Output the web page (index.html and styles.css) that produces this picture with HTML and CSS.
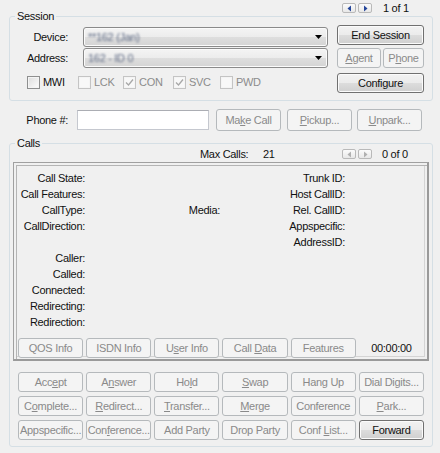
FILE: index.html
```html
<!DOCTYPE html>
<html>
<head>
<meta charset="utf-8">
<title>Session</title>
<link rel="stylesheet" href="styles.css">
</head>
<body>
<div class="app">
  <div class="topbar">
    <div class="nav">
      <span class="navbtn"><svg width="5" height="7" viewBox="0 0 5 7"><path d="M4 0.5 L0.5 3.5 L4 6.5Z" class="tri on"/></svg></span>
      <span class="navbtn"><svg width="5" height="7" viewBox="0 0 5 7"><path d="M1 0.5 L4.5 3.5 L1 6.5Z" class="tri on"/></svg></span>
    </div>
    <span class="count">1 of 1</span>
  </div>

  <section class="group session">
    <span class="group-title">Session</span>
    <div class="session-body">
      <div class="session-left">
        <div class="field-row first">
          <span class="lbl">Device:</span>
          <div class="combo"><span class="blur">**162 (Jan)</span><svg class="arrow" width="7" height="4" viewBox="0 0 7 4"><path d="M0 0 L7 0 L3.5 4Z" fill="#000"/></svg></div>
        </div>
        <div class="field-row second">
          <span class="lbl">Address:</span>
          <div class="combo"><span class="blur">162 - ID 0</span><svg class="arrow" width="7" height="4" viewBox="0 0 7 4"><path d="M0 0 L7 0 L3.5 4Z" fill="#000"/></svg></div>
        </div>
        <div class="checks">
          <span class="chk"><span class="cb"></span>MWI</span>
          <span class="chk off"><span class="cb"></span>LCK</span>
          <span class="chk off"><span class="cb"><svg width="11" height="11" viewBox="0 0 11 11"><path d="M2 5.5 L4.5 8 L9 2.5" fill="none" stroke="#a8a8a8" stroke-width="1.3"/></svg></span>CON</span>
          <span class="chk off"><span class="cb"><svg width="11" height="11" viewBox="0 0 11 11"><path d="M2 5.5 L4.5 8 L9 2.5" fill="none" stroke="#a8a8a8" stroke-width="1.3"/></svg></span>SVC</span>
          <span class="chk off"><span class="cb"></span>PWD</span>
        </div>
      </div>
      <div class="session-right">
        <button class="btn on end">End Session</button>
        <div class="pair">
          <button class="btn agent"><u>A</u>gent</button>
          <button class="btn phone">P<u>h</u>one</button>
        </div>
        <button class="btn on configure">Configure</button>
      </div>
    </div>
  </section>

  <div class="phone-row">
    <span class="lbl phone-lbl">Phone #:</span>
    <span class="edit"></span>
    <button class="btn tall make">Ma<u>k</u>e Call</button>
    <button class="btn tall pickup"><u>P</u>ickup...</button>
    <button class="btn tall unpark"><u>U</u>npark...</button>
  </div>

  <section class="group calls">
    <span class="group-title">Calls</span>
    <div class="calls-top">
      <span class="maxlbl">Max Calls:</span>
      <span>21</span>
      <div class="nav calls-nav">
        <span class="navbtn"><svg width="5" height="7" viewBox="0 0 5 7"><path d="M4 0.5 L0.5 3.5 L4 6.5Z" class="tri"/></svg></span>
        <span class="navbtn"><svg width="5" height="7" viewBox="0 0 5 7"><path d="M1 0.5 L4.5 3.5 L1 6.5Z" class="tri"/></svg></span>
      </div>
      <span class="count calls-count">0 of 0</span>
    </div>

    <div class="panel">
      <div class="info">
        <div class="col col1">
          <div>Call State:</div>
          <div>Call Features:</div>
          <div>CallType:</div>
          <div>CallDirection:</div>
          <div></div>
          <div>Caller:</div>
          <div>Called:</div>
          <div>Connected:</div>
          <div>Redirecting:</div>
          <div>Redirection:</div>
        </div>
        <div class="col col2">
          <div>Media:</div>
        </div>
        <div class="col col3">
          <div>Trunk ID:</div>
          <div>Host CallID:</div>
          <div>Rel. CallID:</div>
          <div>Appspecific:</div>
          <div>AddressID:</div>
        </div>
      </div>
      <div class="grid6 panel-btns">
        <button class="btn">QOS Info</button>
        <button class="btn">ISDN Info</button>
        <button class="btn">U<u>s</u>er Info</button>
        <button class="btn">Call <u>D</u>ata</button>
        <button class="btn">Features</button>
        <span class="time">00:00:00</span>
      </div>
    </div>

    <div class="grid6 actions">
      <button class="btn">Acc<u>e</u>pt</button>
      <button class="btn">A<u>n</u>swer</button>
      <button class="btn">Ho<u>l</u>d</button>
      <button class="btn"><u>S</u>wap</button>
      <button class="btn">Hang Up</button>
      <button class="btn">Dial Di<u>g</u>its...</button>
      <button class="btn">C<u>o</u>mplete...</button>
      <button class="btn"><u>R</u>edirect...</button>
      <button class="btn"><u>T</u>ransfer...</button>
      <button class="btn"><u>M</u>erge</button>
      <button class="btn">Conference</button>
      <button class="btn"><u>P</u>ark...</button>
      <button class="btn">Appspecific...</button>
      <button class="btn">Con<u>f</u>erence...</button>
      <button class="btn">Add Party</button>
      <button class="btn">Drop Party</button>
      <button class="btn">Conf <u>L</u>ist...</button>
      <button class="btn on">Forward</button>
    </div>
  </section>

  <div class="status">
    <span class="pane main"></span>
    <span class="pane side"></span>
  </div>
</div>
</body>
</html>
```

FILE: styles.css
```css
* { box-sizing: border-box; }
html, body { margin: 0; }
body {
  width: 440px;
  height: 453px;
  overflow: hidden;
  background: #f0f0f0;
  font: 11px/13px "Liberation Sans", Arial, sans-serif;
  letter-spacing: -0.3px;
  color: #111;
}
.app { padding: 0 7px 0 9px; }

/* top pager */
.topbar {
  height: 16px;
  display: flex;
  justify-content: flex-end;
  align-items: flex-start;
  padding-right: 20px;
}
.nav { display: flex; gap: 2px; margin-top: 3px; }
.navbtn {
  width: 14px;
  height: 10px;
  border: 1px solid #b9b9b9;
  border-radius: 2px;
  background: linear-gradient(#fbfbfb, #e8e8e8);
  display: flex;
  align-items: center;
  justify-content: center;
}
.tri { fill: #b0b0b0; }
.tri.on { fill: #24459a; }
.count { width: 30px; margin-left: 11px; margin-top: 2px; white-space: nowrap; }

/* group boxes */
.group {
  position: relative;
  border: 1px solid #d5dfe5;
  border-radius: 3px;
}
.group-title {
  position: absolute;
  top: -7px;
  left: 5px;
  padding: 0 2px;
  line-height: 13px;
  background: #f0f0f0;
}

.session { padding: 8px 8px 7px 0; }
.session-body { display: flex; gap: 9px; }
.session-left { width: 318px; }
.field-row { display: flex; align-items: center; gap: 15px; height: 20px; }
.field-row.first { margin-top: 2px; }
.field-row.second { margin-top: 1px; }
.lbl { width: 58px; text-align: right; flex: none; }
.combo {
  width: 245px;
  height: 20px;
  border: 1px solid #8a8a8a;
  border-radius: 3px;
  background: linear-gradient(#f4f4f4 0%, #ececec 50%, #dedede 50%, #d4d4d4 100%);
  box-shadow: inset 0 0 0 1px #fbfbfb;
  display: flex;
  align-items: center;
  padding: 0 5px 0 4px;
}
.blur { color: #5f6b85; filter: blur(1.1px); flex: 1; }
.arrow { flex: none; }

.checks {
  margin-top: 8px;
  padding-left: 17px;
  display: grid;
  grid-template-columns: 51px 45px 50px 47px auto;
  height: 13px;
  align-items: center;
}
.chk { display: flex; align-items: center; gap: 3px; }
.chk.off { color: #8c8c8c; }
.cb {
  width: 13px;
  height: 13px;
  flex: none;
  border: 1px solid #8e8f8f;
  background: linear-gradient(135deg, #dcdcdc, #fdfdfd);
  box-shadow: inset 0 0 0 1px #f4f4f4;
  display: flex;
  align-items: center;
  justify-content: center;
}
.chk.off .cb { border-color: #c4c4c4; background: #f8f8f8; }

.session-right { width: 87px; display: flex; flex-direction: column; }
.pair { display: flex; gap: 2px; margin-top: 3px; }
.agent { width: 44px; height: 18px; }
.phone { flex: 1; height: 18px; }
.end { height: 20px; }
.configure { height: 18px; margin-top: 5px; }

/* buttons */
.btn {
  font: inherit;
  letter-spacing: inherit;
  height: 20px;
  padding: 0;
  border: 1px solid #b5b9bc;
  border-radius: 3px;
  background: #f4f4f4;
  color: #8a8a8a;
  white-space: nowrap;
  overflow: hidden;
  text-align: center;
}
.btn.on {
  border-color: #707070;
  color: #111;
  background: linear-gradient(#f2f2f2 0%, #ebebeb 50%, #dddddd 50%, #cfcfcf 100%);
  box-shadow: inset 0 0 0 1px #fbfbfb;
}
.btn u { text-underline-offset: 1px; }
.btn.tall { height: 22px; width: 65px; }

/* phone row */
.phone-row { display: flex; align-items: center; height: 22px; margin-top: 8px; }
.phone-lbl { width: 59px; }
.edit {
  width: 132px;
  height: 20px;
  margin-left: 9px;
  background: #fff;
  border: 1px solid #c5c8cf;
  border-top-color: #abadb3;
}
.make { margin-left: 7px; }
.pickup { margin-left: 6px; }
.unpark { margin-left: 5px; }

/* calls */
.calls { margin-top: 12px; padding: 4px 3px 6px 3px; }
.calls-top { display: flex; align-items: center; height: 12px; padding-left: 187px; padding-right: 17px; }
.maxlbl { width: 63px; }
.calls-nav { margin: 0 0 0 auto; }
.calls-count { margin: 0 0 0 10px; }

.panel {
  margin-top: 2px;
  height: 199px;
  border-top: 1px solid #a0a0a0;
  border-left: 1px solid #a0a0a0;
  border-right: 2px solid #9a9a9a;
  border-bottom: 2px solid #9a9a9a;
  box-shadow:
    inset 2px 2px 0 #f0f0f0,
    inset 3px 3px 0 #b4b4b4,
    inset -2px -2px 0 #f0f0f0,
    inset -3px -3px 0 #d4d4d4;
  padding: 7px 3px 0 4px;
}
.info { display: flex; height: 160px; }
.col { text-align: right; }
.col > div { height: 16px; line-height: 16px; }
.col1 { width: 67px; }
.col2 { width: 135px; padding-top: 32px; }
.col3 { width: 125px; }

.grid6 {
  display: grid;
  grid-template-columns: repeat(6, 1fr);
  column-gap: 3px;
}
.panel-btns { margin-top: 8px; height: 20px; }
.time { line-height: 20px; text-align: center; }

.actions { margin: 11px 5px 0; row-gap: 4px; grid-auto-rows: 20px; }

/* bottom panes */
.status { display: flex; gap: 5px; margin-top: 7px; }
.pane { height: 20px; background: #fff; border: 1px solid #a0a0a0; }
.pane.main { width: 348px; }
.pane.side { flex: 1; }
```
